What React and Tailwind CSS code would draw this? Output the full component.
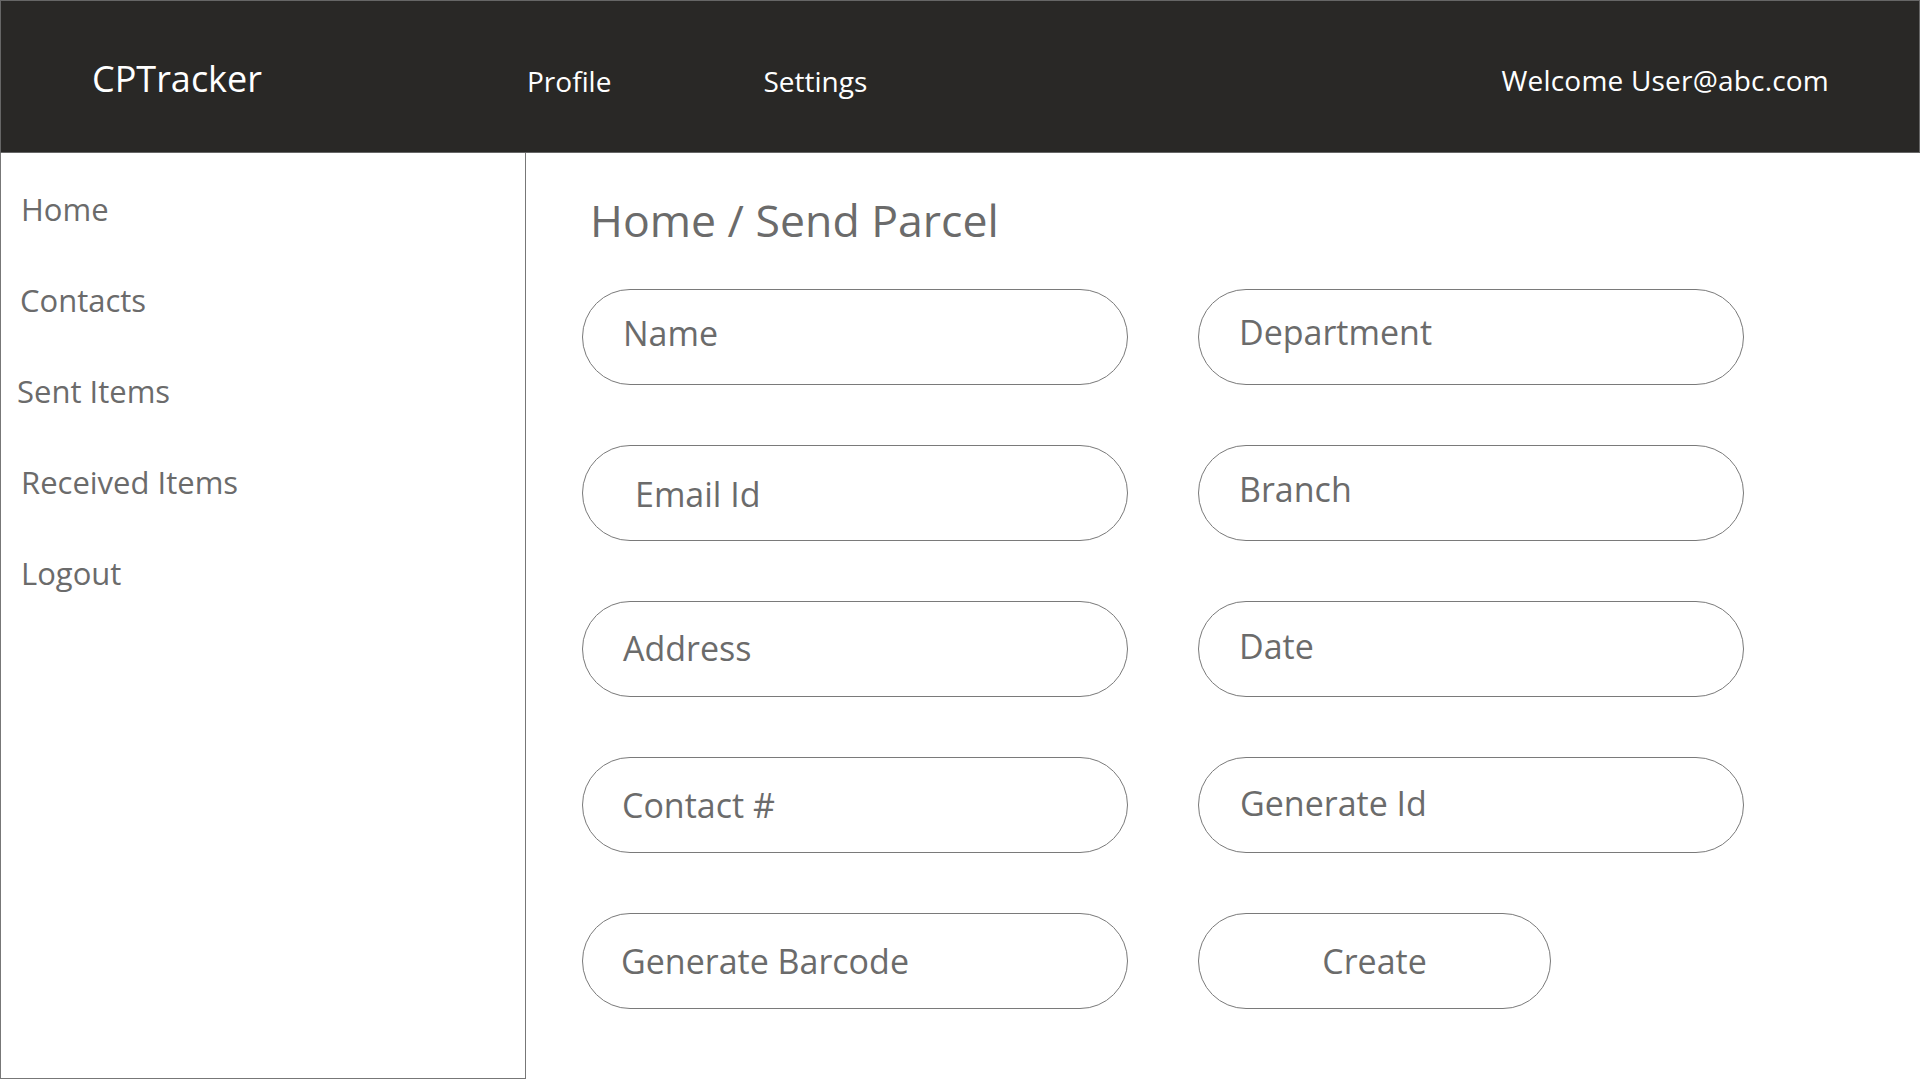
import React from 'react';

const leftFields = [
  { label: 'Name', cls: 'pl-[40px] pb-[8px]' },
  { label: 'Email Id', cls: 'pl-[52px] pt-[2px]' },
  { label: 'Address', cls: 'pl-[40px] pb-[2px]' },
  { label: 'Contact #', cls: 'pl-[39px]' },
  { label: 'Generate Barcode', cls: 'pl-[38px] pt-[1px]' },
];

const rightFields = [
  { label: 'Department', cls: 'pl-[40px] pb-[10px]' },
  { label: 'Branch', cls: 'pl-[40px] pb-[8px]' },
  { label: 'Date', cls: 'pl-[40px] pb-[6px]' },
  { label: 'Generate Id', cls: 'pl-[41px] pb-[4px]' },
];

const menu = [
  { label: 'Home', cls: 'pl-[20px]' },
  { label: 'Contacts', cls: 'pl-[19px]' },
  { label: 'Sent Items', cls: 'pl-[16px]' },
  { label: 'Received Items', cls: 'pl-[20px]' },
  { label: 'Logout', cls: 'pl-[20px]' },
];

// Rounded pill used for every field on the form
function Pill({ label, cls, width = 'w-[546px]' }) {
  return (
    <div
      className={`${width} h-[96px] rounded-full border border-[#7a7a7a] flex items-center text-[34px] text-[#6b6b6b] ${cls}`}
    >
      {label}
    </div>
  );
}

export default function App() {
  return (
    <div
      className="w-[1920px] h-[1080px] bg-white flex flex-col overflow-hidden"
      style={{ fontFamily: '"Open Sans", "Noto Sans", sans-serif' }}
    >
      {/* Top bar */}
      <header className="h-[153px] shrink-0 bg-[#292826] border border-[#666666] flex items-center text-white">
        <div className="pl-[91px] w-[526px] text-[36px] pt-[4px]">CPTracker</div>
        <nav className="flex items-center gap-[152px] text-[28px] pt-[9px]">
          <span>Profile</span>
          <span>Settings</span>
        </nav>
        <div className="ml-auto pr-[90px] text-[28px] tracking-[0.2px] pt-[7px]">Welcome User@abc.com</div>
      </header>

      <div className="flex flex-1 min-h-0">
        {/* Sidebar */}
        <aside className="w-[526px] shrink-0 border-l border-r border-b border-[#777777] mb-[1px] pt-[34px] flex flex-col gap-[46px] text-[31px] text-[#6b6b6b]">
          {menu.map((m) => (
            <div key={m.label} className={`h-[45px] flex items-center ${m.cls}`}>
              {m.label}
            </div>
          ))}
        </aside>

        {/* Main content */}
        <main className="flex-1 pl-[56px] pt-[37px]">
          <h1 className="pl-[8px] text-[44.6px] leading-[60px] text-[#6b6b6b]">Home / Send Parcel</h1>
          <div className="mt-[39px] flex gap-[70px]">
            <div className="flex flex-col gap-[60px]">
              {leftFields.map((f) => (
                <Pill key={f.label} label={f.label} cls={f.cls} />
              ))}
            </div>
            <div className="flex flex-col gap-[60px]">
              {rightFields.map((f) => (
                <Pill key={f.label} label={f.label} cls={f.cls} />
              ))}
              <button className="w-[353px] h-[96px] rounded-full border border-[#7a7a7a] text-[34px] text-[#6b6b6b] flex items-center justify-center pt-[1px]">
                Create
              </button>
            </div>
          </div>
        </main>
      </div>
    </div>
  );
}
